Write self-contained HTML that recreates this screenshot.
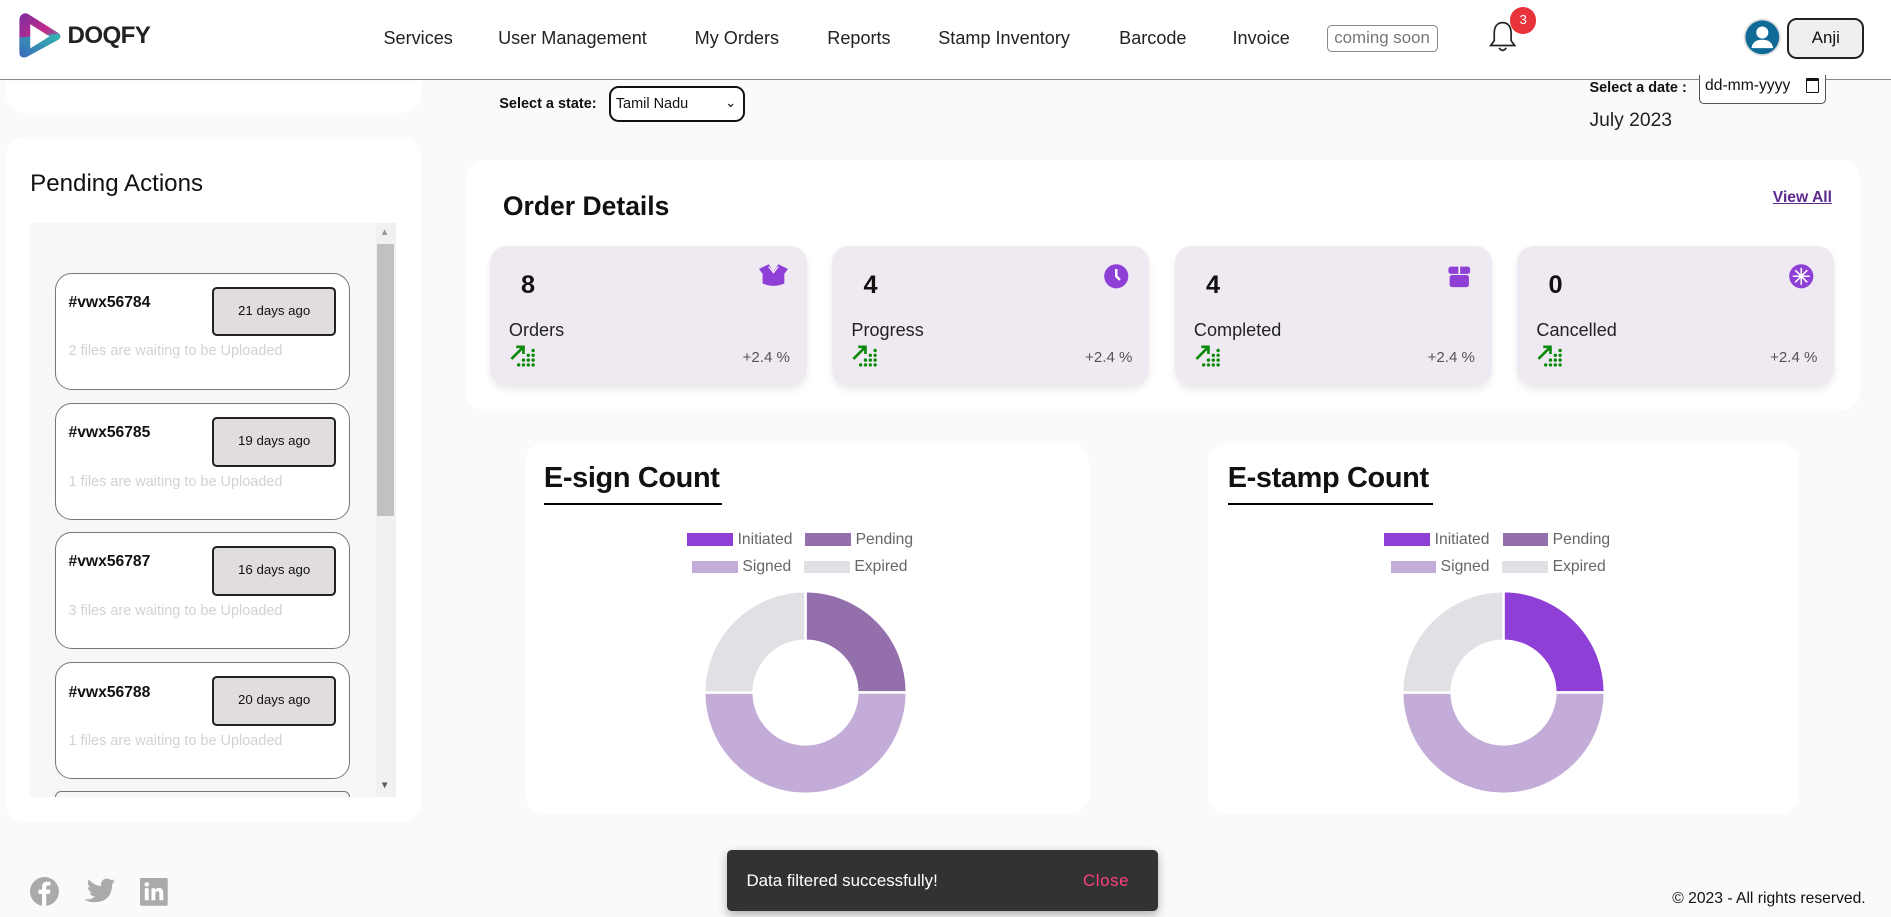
<!DOCTYPE html>
<html><head><meta charset="utf-8">
<style>
*{box-sizing:border-box;margin:0;padding:0}
html,body{width:1891px;height:917px;overflow:hidden;background:#f9fafc}
#w{position:relative;width:1568px;height:760px;zoom:1.20599;font-family:"Liberation Sans",Arial,sans-serif;color:#111}
.a{position:absolute}
.hdr{left:0;top:0;width:1568px;height:66px;background:#fff;border-bottom:1px solid #8a8a8a}
.nav{top:23px;font-size:15px;color:#222;white-space:nowrap}
.card{background:#fff;border-radius:16px}
.stat{background:#efe9f1;border-radius:14px;width:263px;height:116px;top:204px;box-shadow:0 3px 6px rgba(0,0,0,.08)}
.stat .n{position:absolute;left:26px;top:21px;font-size:21px;font-weight:bold}
.stat .l{position:absolute;left:16px;top:61px;font-size:15px;color:#222}
.stat .p{position:absolute;right:14px;top:85px;font-size:12.5px;color:#555}
.stat .tr{position:absolute;left:16px;top:80px}
.stat .ic{position:absolute;right:16px;top:14px}
.item{left:46px;width:244px;height:97px;border:1px solid #777;border-radius:14px;background:#fff}
.item .id{position:absolute;left:10px;top:17px;font-size:13px;font-weight:bold}
.item .b{position:absolute;left:129px;top:11px;width:103px;height:41px;background:#e1dddd;border:2px solid #222;border-radius:4px;font-size:11px;text-align:center;line-height:37px}
.item .s{position:absolute;left:10px;top:58px;font-size:12px;color:#d2d2d2}
.ct{font-size:24px;font-weight:bold;letter-spacing:-.3px}
.leg{font-size:13px;color:#666}
.sw{display:inline-block;width:38px;height:10px;vertical-align:middle}
</style></head><body><div id="w">

<div class="a hdr"></div>
<svg class="a" style="left:14px;top:9px" width="38" height="42" viewBox="0 0 38 42">
<defs><linearGradient id="lg" x1="0" y1="0" x2="1" y2="1"><stop offset="0" stop-color="#7a2fa0"/><stop offset=".5" stop-color="#c22a8a"/><stop offset="1" stop-color="#21b9b4"/></linearGradient>
<linearGradient id="lg2" x1="0" y1="1" x2="1" y2="0"><stop offset="0" stop-color="#2a6fc0"/><stop offset="1" stop-color="#2bc0b0"/></linearGradient></defs>
<path d="M6 2 Q2 3 2 8 V34 Q2 40 8 38 L34 24 Q38 21 34 18 L10 3 Q8 1.5 6 2Z" fill="url(#lg)"/>
<path d="M2 22 V34 Q2 40 8 38 L34 24 Q37 22 35 19 Z" fill="url(#lg2)" opacity=".9"/>
<path d="M11 11 L27 21 L11 31Z" fill="#fff"/>
</svg>
<div class="a" style="left:56px;top:18px;font-size:20px;font-weight:bold;color:#222;letter-spacing:-.5px">DOQFY</div>

<div class="a nav" style="left:318px">Services</div>
<div class="a nav" style="left:413px">User Management</div>
<div class="a nav" style="left:576px">My Orders</div>
<div class="a nav" style="left:686px">Reports</div>
<div class="a nav" style="left:778px">Stamp Inventory</div>
<div class="a nav" style="left:928px">Barcode</div>
<div class="a nav" style="left:1022px">Invoice</div>
<div class="a" style="left:1100px;top:21px;width:92px;height:22px;border:1px solid #888;border-radius:4px;font-size:14px;color:#777;text-align:center;line-height:20px">coming soon</div>
<svg class="a" style="left:1233px;top:16px" width="26" height="28" viewBox="0 0 26 28"><path d="M13 3 C8 3 6 7 6 12 V18 L3 22 H23 L20 18 V12 C20 7 18 3 13 3Z" fill="none" stroke="#222" stroke-width="1.4"/><path d="M10 24 Q13 28 16 24" fill="none" stroke="#222" stroke-width="1.4"/></svg>
<div class="a" style="left:1252px;top:6px;width:22px;height:22px;border-radius:50%;background:#e8333a;color:#fff;font-size:11px;text-align:center;line-height:22px">3</div>
<svg class="a" style="left:1445px;top:15px" width="32" height="32" viewBox="0 0 32 32"><circle cx="16" cy="16" r="15.5" fill="#ddd"/><circle cx="16" cy="16" r="14" fill="#0f6a98"/><circle cx="16" cy="12" r="5" fill="#fff"/><path d="M7 25 Q8 18 16 18 Q24 18 25 25Z" fill="#fff"/></svg>
<div class="a" style="left:1482px;top:15px;width:64px;height:34px;background:#efefef;border:2px solid #222;border-radius:8px;font-size:14px;text-align:center;line-height:30px">Anji</div>

<!-- left -->
<div class="a" style="left:5px;top:67px;width:344px;height:27px;background:#fff;border-radius:0 0 16px 16px"></div>
<div class="a card" style="left:5px;top:114px;width:344px;height:568px"></div>
<div class="a" style="left:25px;top:141px;font-size:20px;color:#111">Pending Actions</div>
<div class="a" style="left:25px;top:185px;width:288px;height:476px;background:#f7f7f7;overflow:hidden">
</div>
<div class="a" style="left:312px;top:185px;width:16px;height:476px;background:#f1f1f1"></div>
<div class="a" style="left:313px;top:202px;width:14px;height:226px;background:#c1c1c1"></div>
<div class="a" style="left:315px;top:188px;font-size:8px;color:#999">▲</div>
<div class="a" style="left:315px;top:647px;font-size:8px;color:#555">▼</div>
<div class="a item" style="top:226px"><div class="id">#vwx56784</div><div class="b">21 days ago</div><div class="s">2 files are waiting to be Uploaded</div></div>
<div class="a item" style="top:334px"><div class="id">#vwx56785</div><div class="b">19 days ago</div><div class="s">1 files are waiting to be Uploaded</div></div>
<div class="a item" style="top:441px"><div class="id">#vwx56787</div><div class="b">16 days ago</div><div class="s">3 files are waiting to be Uploaded</div></div>
<div class="a item" style="top:549px"><div class="id">#vwx56788</div><div class="b">20 days ago</div><div class="s">1 files are waiting to be Uploaded</div></div>
<div class="a" style="left:46px;top:656px;width:244px;height:5px;border:1px solid #777;border-bottom:none;border-radius:14px 14px 0 0;overflow:hidden"></div>

<!-- filters -->
<div class="a" style="left:414px;top:80px;font-size:12px;font-weight:bold">Select a state:</div>
<div class="a" style="left:505px;top:71px;width:113px;height:30px;border:2px solid #111;border-radius:8px;background:#fff;font-size:12px;padding:7px 4px">Tamil Nadu<span style="position:absolute;right:6px;top:6px;font-size:11px">&#8964;</span></div>
<div class="a" style="left:1318px;top:66px;font-size:12px;font-weight:bold">Select a date :</div>
<div class="a" style="left:1409px;top:62px;width:105px;height:24px;border:1px solid #555;border-top:none;border-radius:0 0 4px 4px;background:#fff;font-size:13px;padding:2px 4px">dd-mm-yyyy <span style="position:absolute;right:5px;top:3px;width:11px;height:12px;border:1.5px solid #111;border-top-width:3px;border-radius:1px"></span></div>
<div class="a" style="left:1318px;top:91px;font-size:16px;color:#222">July 2023</div>

<!-- order details -->
<div class="a card" style="left:386px;top:133px;width:1156px;height:208px"></div>
<div class="a" style="left:417px;top:158px;font-size:22px;font-weight:bold">Order Details</div>
<div class="a" style="left:1470px;top:157px;font-size:13px;font-weight:bold;color:#5b2a8c;text-decoration:underline">View All</div>

<svg width="0" height="0" style="position:absolute"><defs>
<g id="tr"><path d="M2 14 L11 5 M6 4 H12 V10" fill="none" stroke="#0a8a0a" stroke-width="2.2"/>
<g fill="#0a8a0a"><circle cx="20" cy="7" r="1.4"/><circle cx="20" cy="11" r="1.4"/><circle cx="16" cy="11" r="1.4"/><circle cx="12" cy="15" r="1.4"/><circle cx="16" cy="15" r="1.4"/><circle cx="20" cy="15" r="1.4"/><circle cx="8" cy="19" r="1.4"/><circle cx="12" cy="19" r="1.4"/><circle cx="16" cy="19" r="1.4"/><circle cx="20" cy="19" r="1.4"/></g></g>
</defs></svg>

<div class="a stat" style="left:406px"><div class="n">8</div><div class="l">Orders</div><svg class="tr" width="24" height="22"><use href="#tr"/></svg><div class="p">+2.4 %</div>
<svg class="ic" width="24" height="22" viewBox="0 0 24 22"><path d="M3 6 L8 3 L12 8 L16 3 L21 6 V17 Q12 21 3 17Z" fill="#8e3fd6"/><path d="M0 5 L8 1 L12 7 L16 1 L24 5 L21 9 L12 8 L3 9Z" fill="#8e3fd6"/><path d="M8 3 L12 8 L16 3" fill="none" stroke="#fff" stroke-width="1"/></svg></div>
<div class="a stat" style="left:690px"><div class="n">4</div><div class="l">Progress</div><svg class="tr" width="24" height="22"><use href="#tr"/></svg><div class="p">+2.4 %</div>
<svg class="ic" width="22" height="22" viewBox="0 0 22 22"><circle cx="11" cy="11" r="10" fill="#8e3fd6"/><path d="M11 5 V11 L14 14" fill="none" stroke="#fff" stroke-width="2"/></svg></div>
<div class="a stat" style="left:974px"><div class="n">4</div><div class="l">Completed</div><svg class="tr" width="24" height="22"><use href="#tr"/></svg><div class="p">+2.4 %</div>
<svg class="ic" width="22" height="22" viewBox="0 0 22 22"><rect x="2" y="3" width="18" height="6" rx="2" fill="#8e3fd6"/><rect x="3" y="10" width="16" height="10" rx="2" fill="#8e3fd6"/><rect x="10.3" y="3" width="1.4" height="6" fill="#fff"/></svg></div>
<div class="a stat" style="left:1258px"><div class="n">0</div><div class="l">Cancelled</div><svg class="tr" width="24" height="22"><use href="#tr"/></svg><div class="p">+2.4 %</div>
<svg class="ic" width="22" height="22" viewBox="0 0 22 22"><circle cx="11" cy="11" r="10" fill="#8e3fd6"/><g stroke="#fff" stroke-width="1.3"><path d="M6 6 L16 16 M16 6 L6 16 M11 4 V18 M4 11 H18"/></g></svg></div>

<!-- charts -->
<div class="a card" style="left:435px;top:367px;width:468px;height:308px"></div>
<div class="a ct" style="left:451px;top:383px">E-sign Count</div>
<div class="a" style="left:451px;top:417px;width:148px;height:2px;background:#000"></div>
<div class="a leg" style="left:570px;top:440px"><span class="sw" style="background:#8e3fd6"></span> Initiated &nbsp; <span class="sw" style="background:#9370ab"></span> Pending</div>
<div class="a leg" style="left:574px;top:463px"><span class="sw" style="background:#c4acd8"></span> Signed &nbsp; <span class="sw" style="background:#e2e0e5"></span> Expired</div>
<svg class="a" style="left:583px;top:489px" width="170" height="170" viewBox="-85 -85 170 170"><g stroke="#fff" stroke-width="2">
<path d="M0,-84 A84,84 0 0 1 84,0 L43,0 A43,43 0 0 0 0,-43Z" fill="#9370ab"/>
<path d="M84,0 A84,84 0 0 1 -84,0 L-43,0 A43,43 0 0 0 43,0Z" fill="#c4acd8"/>
<path d="M-84,0 A84,84 0 0 1 0,-84 L0,-43 A43,43 0 0 0 -43,0Z" fill="#e2e0e5"/></g></svg>

<div class="a card" style="left:1002px;top:367px;width:490px;height:308px"></div>
<div class="a ct" style="left:1018px;top:383px">E-stamp Count</div>
<div class="a" style="left:1018px;top:417px;width:170px;height:2px;background:#000"></div>
<div class="a leg" style="left:1148px;top:440px"><span class="sw" style="background:#8e3fd6"></span> Initiated &nbsp; <span class="sw" style="background:#9370ab"></span> Pending</div>
<div class="a leg" style="left:1153px;top:463px"><span class="sw" style="background:#c4acd8"></span> Signed &nbsp; <span class="sw" style="background:#e2e0e5"></span> Expired</div>
<svg class="a" style="left:1162px;top:489px" width="170" height="170" viewBox="-85 -85 170 170"><g stroke="#fff" stroke-width="2">
<path d="M0,-84 A84,84 0 0 1 84,0 L43,0 A43,43 0 0 0 0,-43Z" fill="#8e3fd6"/>
<path d="M84,0 A84,84 0 0 1 -84,0 L-43,0 A43,43 0 0 0 43,0Z" fill="#c4acd8"/>
<path d="M-84,0 A84,84 0 0 1 0,-84 L0,-43 A43,43 0 0 0 -43,0Z" fill="#e2e0e5"/></g></svg>

<!-- footer -->
<svg class="a" style="left:25px;top:727px" width="24" height="24" viewBox="0 0 24 24"><circle cx="12" cy="12" r="12" fill="#aaa"/><path d="M13.5 24 V14 H16.5 L17 10.5 H13.5 V8.5 Q13.5 7 15 7 H17 V4 Q15.5 3.8 14.2 3.8 Q10 3.8 10 8 V10.5 H7 V14 H10 V24Z" fill="#fff"/></svg>
<svg class="a" style="left:70px;top:728px" width="26" height="22" viewBox="0 0 24 20"><path d="M24 2.4 Q22.8 3 21.6 3.1 Q23 2.2 23.4 0.7 Q22.2 1.5 20.8 1.7 Q19.5 0.3 17.6 0.3 Q13.2 0.5 13 5 Q13 5.5 13.1 6 Q7.8 5.8 3.6 1 Q1.8 4.5 4.9 7.1 Q3.8 7.1 3 6.6 Q3 10 6.4 11 Q5.3 11.3 4.4 11 Q5.4 13.9 8.5 14 Q5 16.8 0 16.3 Q3.3 18.4 7.5 18.4 Q21.5 18.4 21.6 4.3 Q23 3.4 24 2.4Z" fill="#aaa"/></svg>
<svg class="a" style="left:116px;top:728px" width="23" height="23" viewBox="0 0 23 23"><rect width="23" height="23" rx="1" fill="#aaa"/><rect x="4" y="8.5" width="3.2" height="10" fill="#fff"/><circle cx="5.6" cy="5.3" r="1.9" fill="#fff"/><path d="M9.5 8.5 H12.5 V10 Q13.5 8.2 15.8 8.2 Q19.3 8.2 19.3 12.5 V18.5 H16.1 V13 Q16.1 10.9 14.5 10.9 Q12.7 10.9 12.7 13 V18.5 H9.5Z" fill="#fff"/></svg>

<div class="a" style="left:603px;top:705px;width:357px;height:50px;background:#323232;border-radius:4px;box-shadow:0 3px 8px rgba(0,0,0,.3)">
<div class="a" style="left:16px;top:17px;font-size:14px;color:#fff">Data filtered successfully!</div>
<div class="a" style="left:295px;top:17px;font-size:14px;color:#ff4081;letter-spacing:.5px">Close</div></div>
<div class="a" style="right:21px;top:738px;font-size:13px;color:#111">© 2023 - All rights reserved.</div>

</div></body></html>
